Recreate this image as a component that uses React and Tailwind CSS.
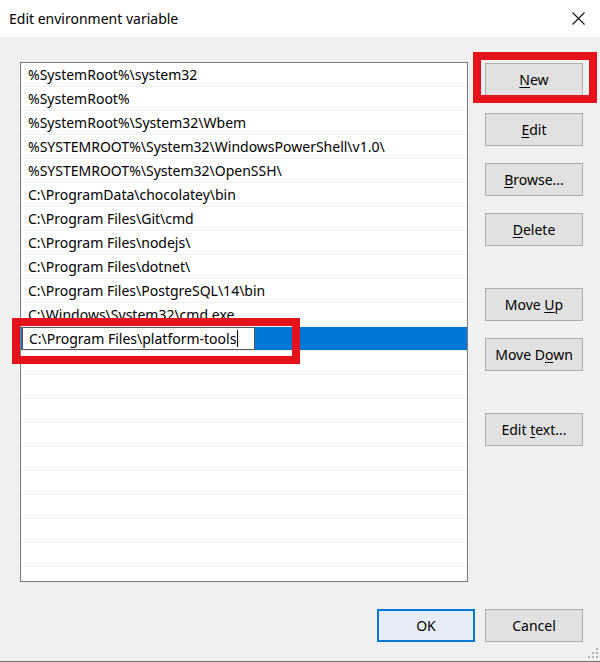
import React from 'react';

const paths = [
  '%SystemRoot%\\system32',
  '%SystemRoot%',
  '%SystemRoot%\\System32\\Wbem',
  '%SYSTEMROOT%\\System32\\WindowsPowerShell\\v1.0\\',
  '%SYSTEMROOT%\\System32\\OpenSSH\\',
  'C:\\ProgramData\\chocolatey\\bin',
  'C:\\Program Files\\Git\\cmd',
  'C:\\Program Files\\nodejs\\',
  'C:\\Program Files\\dotnet\\',
  'C:\\Program Files\\PostgreSQL\\14\\bin',
  'C:\\Windows\\System32\\cmd.exe',
];

const font = { fontFamily: '"Noto Sans", "Open Sans", sans-serif' };

function Btn({ children, className = '' }) {
  return (
    <button
      className={`h-[33px] w-[98px] bg-[#e1e1e1] border border-[#adadad] text-[14px] text-black flex items-center justify-center ${className}`}
    >
      <span className="whitespace-pre">{children}</span>
    </button>
  );
}

function Key({ children }) {
  return <span className="underline underline-offset-2">{children}</span>;
}

export default function App() {
  return (
    <div className="relative w-[600px] h-[662px] bg-[#f0f0f0] flex flex-col border-b border-[#707070] overflow-hidden" style={font}>
      {/* title bar */}
      <div className="h-[37px] bg-white flex items-center justify-between pl-[9px] pr-[15px] shrink-0">
        <span className="text-[14px] text-black">Edit environment variable</span>
        <svg width="13" height="13" viewBox="0 0 13 13">
          <path d="M0.5 0.5 L12.5 12.5 M12.5 0.5 L0.5 12.5" stroke="#111" strokeWidth="1.1" />
        </svg>
      </div>

      <div className="flex pl-[20px] pt-[25px] gap-[17px]">
        {/* list */}
        <div className="w-[448px] h-[520px] bg-white border border-[#7a7a7a] overflow-hidden">
          {paths.map((p) => (
            <div key={p} className="h-[24px] border-b border-[#f0f0f0] pl-[7px] flex items-center text-[14px] text-black whitespace-nowrap">
              {p}
            </div>
          ))}
          <div className="h-[24px] bg-[#0078d7] flex items-center pl-[1px] pr-[1px] border-b border-[#f0f0f0]">
            <div className="h-[23px] w-[233px] bg-white border border-[#555] flex items-center pl-[6px] text-[14px] text-black whitespace-nowrap">
              C:\Program Files\platform-tools
              <span className="inline-block w-px h-[17px] bg-black ml-px" />
            </div>
          </div>
          {Array.from({ length: 10 }).map((_, i) => (
            <div key={i} className="h-[24px] border-b border-[#f0f0f0]" />
          ))}
        </div>

        {/* buttons */}
        <div className="flex flex-col pt-px">
          <Btn><Key>N</Key>ew</Btn>
          <Btn className="mt-[17px]"><Key>E</Key>dit</Btn>
          <Btn className="mt-[17px]"><Key>B</Key>rowse...</Btn>
          <Btn className="mt-[17px]"><Key>D</Key>elete</Btn>
          <Btn className="mt-[42px]">Move <Key>U</Key>p</Btn>
          <Btn className="mt-[17px]">Move D<Key>o</Key>wn</Btn>
          <Btn className="mt-[42px]">Edit <Key>t</Key>ext...</Btn>
        </div>
      </div>

      {/* bottom buttons */}
      <div className="flex justify-end gap-[10px] pr-[17px] pt-[27px]">
        <button className="h-[33px] w-[98px] bg-[#e5eef7] border-2 border-[#0078d7] text-[14px] text-black">OK</button>
        <Btn>Cancel</Btn>
      </div>

      {/* resize grip */}
      <svg className="absolute right-[2px] bottom-[3px]" width="10" height="10" viewBox="0 0 10 10">
        <rect x="8" y="0" width="2" height="2" fill="#b5b5b5" />
        <rect x="4" y="4" width="2" height="2" fill="#b5b5b5" />
        <rect x="8" y="4" width="2" height="2" fill="#b5b5b5" />
        <rect x="0" y="8" width="2" height="2" fill="#b5b5b5" />
        <rect x="4" y="8" width="2" height="2" fill="#b5b5b5" />
        <rect x="8" y="8" width="2" height="2" fill="#b5b5b5" />
      </svg>

      {/* red annotation boxes */}
      <div className="absolute left-[473px] top-[52px] w-[124px] h-[51px] border-[8px] border-[#e3121b]" />
      <div className="absolute left-[12px] top-[318px] w-[288px] h-[46px] border-[8px] border-[#e3121b]" />
    </div>
  );
}
